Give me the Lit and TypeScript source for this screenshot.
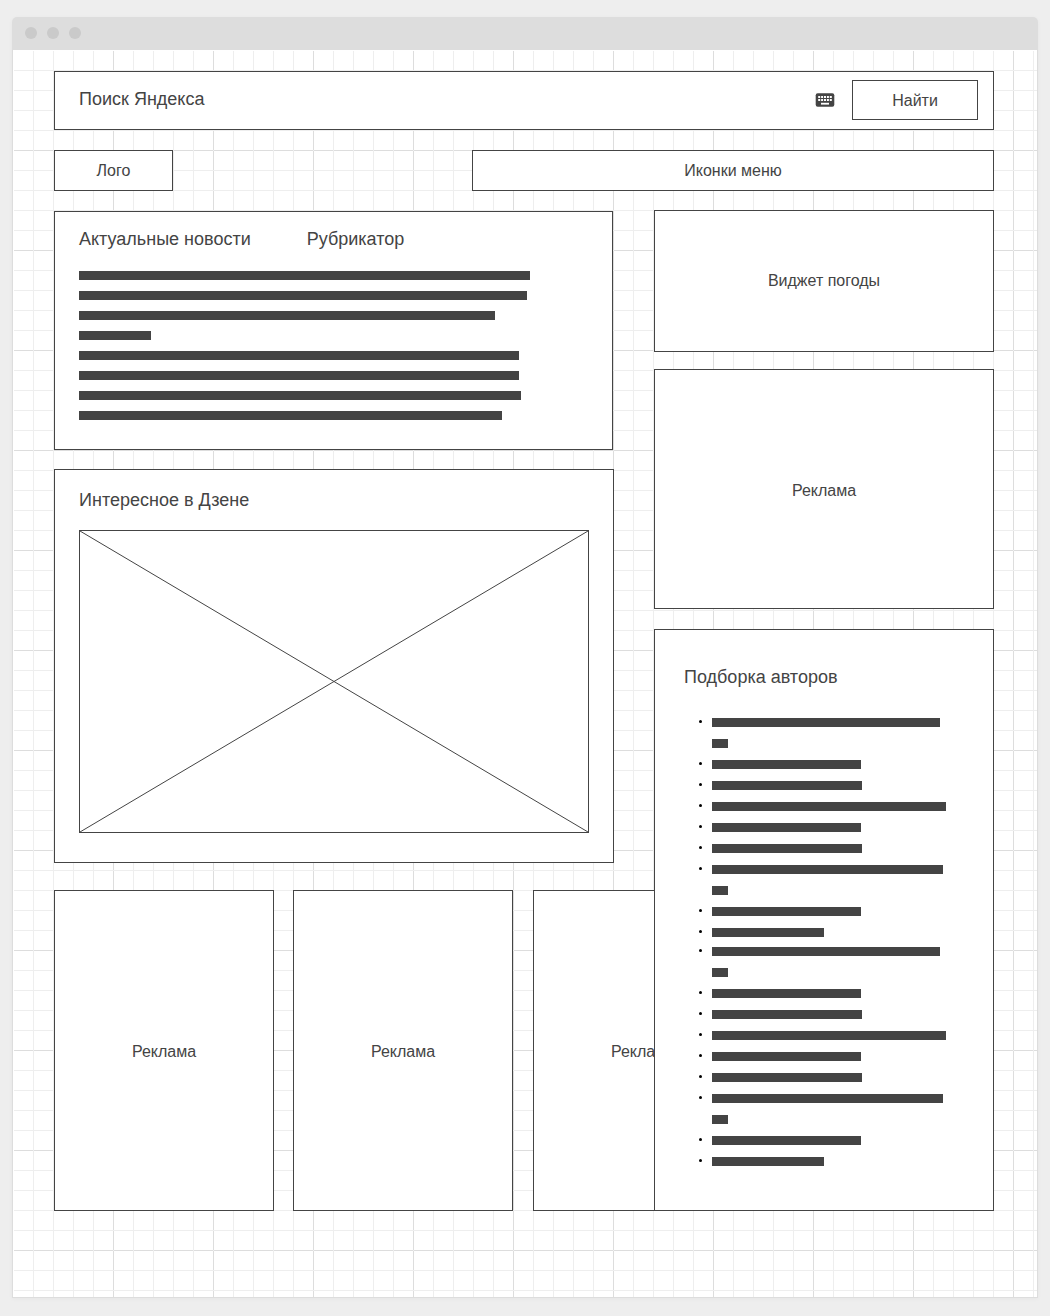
import { LitElement, html, css } from "lit";
import { customElement } from "lit/decorators.js";

const NEWS_LINES = [451, 448, 416, 72, 440, 440, 442, 423];

const AUTHOR_GROUPS: number[][][] = [
  [[228, 16], [149], [150], [234], [149], [150], [231, 16], [149], [112]],
  [[228, 16], [149], [150], [234], [149], [150], [231, 16], [149], [112]],
];

const bar = (width: number) => html`<span class="bar" style="width:${width}px"></span>`;

@customElement("app-root")
export class AppRoot extends LitElement {
  static styles = css`
    :host {
      --ink: #444;
      display: block;
      box-sizing: border-box;
      min-height: 100vh;
      padding: 17px 12px 18px;
      background: #eee;
      color: var(--ink);
      font: 16px/20px "Liberation Sans", Arial, sans-serif;
    }
    *, *::before { box-sizing: border-box; }
    h2, ul { margin: 0; padding: 0; }
    ul { list-style: none; }
    button, input, a { font: inherit; color: inherit; }
    h2, .query { font-size: 18px; line-height: 20px; font-weight: 400; }

    .window {
      border-radius: 5px 5px 0 0;
      box-shadow: 0 1px 4px rgba(0, 0, 0, 0.04);
    }
    .titlebar {
      display: flex;
      align-items: center;
      gap: 10px;
      height: 33px;
      padding: 0 13px 2px;
      border-radius: 5px 5px 0 0;
      background: #ddd;
    }
    .dot { width: 12px; height: 12px; border-radius: 50%; background: #cacaca; }
    .frame {
      padding: 1px 0 0 1px;
      border: 1px solid #ddd;
      border-top: 0;
      background: #fff;
    }
    .canvas {
      padding: 20px 43px 86px 40px;
      background-image:
        conic-gradient(from 90deg at 19px 19px, #eee 25%, transparent 0),
        linear-gradient(to right, transparent 99px, #ddd 99px),
        linear-gradient(to bottom, transparent 99px, #ddd 99px),
        linear-gradient(to right, transparent 19px, #eee 19px),
        linear-gradient(to bottom, transparent 19px, #eee 19px);
      background-size: 20px 20px, 100px 100px, 100px 100px, 20px 20px, 20px 20px;
    }

    .box { border: 1px solid var(--ink); background: #fff; }
    .label { display: flex; align-items: center; justify-content: center; text-decoration: none; }

    .search { display: flex; align-items: center; height: 59px; padding: 0 15px 2px 24px; }
    .query { flex: 1; min-width: 0; padding: 0 0 2px; border: 0; outline: 0; background: none; }
    .query::placeholder { color: var(--ink); opacity: 1; }
    .keys { display: flex; padding: 0; margin-right: 17px; border: 0; background: none; }
    .find { width: 126px; height: 40px; padding: 2px 0 0; }

    .top { display: flex; justify-content: space-between; margin: 20px 0 19px; }
    .logo { width: 119px; height: 41px; }
    .menu { width: 522px; height: 41px; }

    .columns { display: grid; grid-template-columns: minmax(0, 1fr) 340px; gap: 40px; }
    .main, .side { display: flex; flex-direction: column; min-width: 0; }

    .news { margin: 1px 1px 19px 0; padding: 17px 24px 29px; }
    .heads { display: flex; gap: 56px; }
    .lines { display: flex; flex-direction: column; gap: 11px; margin-top: 22px; }
    .bar { display: block; max-width: 100%; height: 9px; background: var(--ink); }

    .zen { margin-bottom: 27px; padding: 20px 24px 29px; }
    .picture { display: block; width: 100%; height: 303px; margin-top: 20px; border: 1px solid var(--ink); }

    .ads { display: flex; gap: 20px; }
    .ad { padding-top: 2px; }
    .ads .ad { flex: none; width: 220px; height: 321px; }
    .ads .ad:first-child { margin-right: -1px; }

    .weather { height: 142px; margin-bottom: 17px; }
    .banner { height: 240px; margin-bottom: 20px; padding-top: 4px; }
    .authors { position: relative; z-index: 1; flex: 1; padding: 37px 29px 44px; }
    .groups { display: flex; flex-direction: column; gap: 10px; margin-top: 31px; }
    .group { display: flex; flex-direction: column; gap: 12px; padding-left: 15px; }
    .author { display: flex; gap: 10px; }
    .author::before {
      content: "";
      flex: none;
      width: 3px;
      height: 3px;
      margin-top: 2px;
      border-radius: 50%;
      background: #000;
    }
    .rows { display: flex; flex: 1; flex-direction: column; gap: 12px; min-width: 0; }
  `;

  render() {
    return html`
      <div class="window">
        <div class="titlebar">
          <span class="dot"></span><span class="dot"></span><span class="dot"></span>
        </div>
        <div class="frame">
          <div class="canvas">
            <form class="box search" role="search" @submit=${(e: Event) => e.preventDefault()}>
              <input class="query" type="text" placeholder="Поиск Яндекса" aria-label="Поиск Яндекса" />
              <button class="keys" type="button" aria-label="Клавиатура">
                <svg width="20" height="14" viewBox="0 0 20 14">
                  <rect x="0.7" y="0.3" width="18.6" height="13.4" rx="2" fill="#444" />
                  <path
                    d="M3.2 4h13.6M3.2 7h13.6"
                    stroke="#fff"
                    stroke-width="2"
                    stroke-dasharray="2 0.9"
                  />
                  <path d="M6 10.7h8" stroke="#fff" stroke-width="1.8" />
                </svg>
              </button>
              <button class="box find" type="submit">Найти</button>
            </form>

            <div class="top">
              <a class="box label logo" href="#">Лого</a>
              <nav class="box label menu">Иконки меню</nav>
            </div>

            <div class="columns">
              <main class="main">
                <section class="box news">
                  <div class="heads">
                    <h2>Актуальные новости</h2>
                    <h2>Рубрикатор</h2>
                  </div>
                  <div class="lines">${NEWS_LINES.map(bar)}</div>
                </section>

                <section class="box zen">
                  <h2>Интересное в Дзене</h2>
                  <svg class="picture" viewBox="0 0 508 301" preserveAspectRatio="none">
                    <path d="M0 0L508 301M508 0L0 301" stroke="#444" vector-effect="non-scaling-stroke" />
                  </svg>
                </section>

                <div class="ads">
                  ${[0, 1, 2].map(() => html`<div class="box label ad">Реклама</div>`)}
                </div>
              </main>

              <aside class="side">
                <div class="box label weather">Виджет погоды</div>
                <div class="box label banner">Реклама</div>
                <section class="box authors">
                  <h2>Подборка авторов</h2>
                  <div class="groups">
                    ${AUTHOR_GROUPS.map(
                      (group) => html`<ul class="group">
                        ${group.map(
                          (rows) => html`<li class="author"><div class="rows">${rows.map(bar)}</div></li>`
                        )}
                      </ul>`
                    )}
                  </div>
                </section>
              </aside>
            </div>
          </div>
        </div>
      </div>
    `;
  }
}
